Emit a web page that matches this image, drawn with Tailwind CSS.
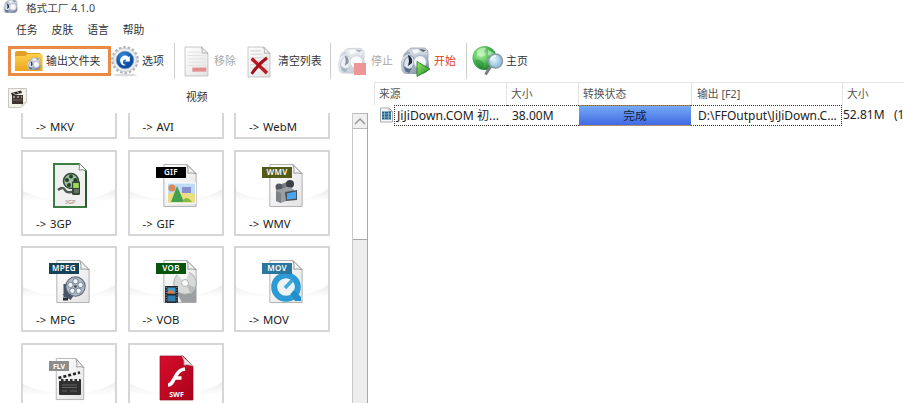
<!DOCTYPE html>
<html lang="zh-CN">
<head>
<meta charset="utf-8">
<title>格式工厂 4.1.0</title>
<script src="https://cdn.jsdelivr.net/npm/@tailwindcss/browser@4"></script>
</head>
<body class="w-[904px] h-[403px] overflow-hidden bg-white font-['Noto_Sans','Noto_Sans_CJK_SC',sans-serif] text-[11px] text-[#333]">
<svg class="absolute size-0">
  <defs>
    <linearGradient id="paper" x1="0" y1="0" x2="1" y2="1"><stop offset="0" stop-color="#fff"/><stop offset="1" stop-color="#e3e3e3"/></linearGradient>
    <linearGradient id="red" x1="0" y1="0" x2="1" y2="1"><stop offset="0" stop-color="#d80d2b"/><stop offset="1" stop-color="#a8021c"/></linearGradient>
    <radialGradient id="blue" cx=".4" cy=".3"><stop offset="0" stop-color="#3b93e0"/><stop offset="1" stop-color="#0a4ea0"/></radialGradient>
    <radialGradient id="green" cx=".35" cy=".35" r=".7"><stop offset="0" stop-color="#b5f2a8"/><stop offset=".55" stop-color="#4dbb55"/><stop offset="1" stop-color="#1a7a2d"/></radialGradient>
    <radialGradient id="lens" cx=".4" cy=".4"><stop offset="0" stop-color="#e3f6ff"/><stop offset="1" stop-color="#94c3dd"/></radialGradient>
    <linearGradient id="gold" x1="0" y1="0" x2="0" y2="1"><stop offset="0" stop-color="#ffd04c"/><stop offset="1" stop-color="#eda51b"/></linearGradient>
    <linearGradient id="metal" x1="0" y1="0" x2="1" y2="1"><stop offset="0" stop-color="#e3e8f0"/><stop offset=".5" stop-color="#b0bac9"/><stop offset="1" stop-color="#6b788c"/></linearGradient>
    <linearGradient id="play" x1="0" y1="0" x2="1" y2="1"><stop offset="0" stop-color="#9be86a"/><stop offset="1" stop-color="#158a1d"/></linearGradient>
    <linearGradient id="fade" x1="0" y1="0" x2="0" y2="1"><stop offset="0" stop-color="#e8e8e8"/><stop offset=".8" stop-color="#fff"/></linearGradient>
    <symbol id="swoosh" viewBox="2 2 92 62">
      <path d="M2 41C14 47 28 50 48 50S82 47 94 39V49C80 53 64 55 48 55S16 53 2 49Z" fill="url(#fade)" opacity=".8"/>
    </symbol>
    <symbol id="page" viewBox="0 0 36 46">
      <path d="M1.500 1.500H25L34.500 11V44.500H1.500Z" fill="url(#paper)" stroke="#b0b0b0"/>
      <path d="M25 1.500Q27 7 26 10.500Q30 9.500 34.500 11Z" fill="#f3f3f3" stroke="#999"/>
    </symbol>
    <symbol id="machine" viewBox="0 0 30 30">
      <path d="M7 5L11 2 25 2 28 5 28 12 22 13 8 11Z" fill="#cdd4de" stroke="#8d96a4" stroke-width=".7"/>
      <path d="M12 4L18 3 20 6 14 8Z" fill="#f4f7fa"/><path d="M19 3L26 4 23 6Z" fill="#5b626d"/>
      <path d="M3 10Q5 4 10 6L10 15 2 18Z" fill="#a3afc1"/>
      <path d="M1 15Q3 8 12 8L28 9 29 20Q29 28 20 28H5Q0 26 1 15Z" fill="url(#metal)"/>
      <ellipse cx="9" cy="17" rx="5" ry="7.500" transform="rotate(20 9 17)" fill="#dbe3ee" stroke="#7d8ba1" stroke-width=".8"/>
      <path d="M8 9Q13 11 12 17L8 20 9 15Z" fill="#222b3c"/><path d="M4 20Q8 24 12 22L9 27 5 25Z" fill="#5a7090"/>
      <circle cx="20" cy="16" r="6.500" fill="#f2f5f9" stroke="#a9b5c8"/><path d="M16 14Q19 10 24 14L20 17Z" fill="#fff"/>
    </symbol>
    <symbol id="reel" viewBox="0 0 20 20">
      <circle cx="10" cy="10" r="9.200" fill="#aeb9c8" stroke="#5b697b" stroke-width="1"/>
      <g fill="#f0f5fb" stroke="#4a5665" stroke-width=".6"><circle cx="10" cy="5" r="2.500"/><circle cx="14.800" cy="8.500" r="2.500"/><circle cx="13" cy="14.100" r="2.500"/><circle cx="7" cy="14.100" r="2.500"/><circle cx="5.200" cy="8.500" r="2.500"/></g>
      <circle cx="10" cy="10" r="1.200" fill="#34404d"/>
    </symbol>
  </defs>
</svg>

<div class="flex h-full flex-col">
  <header class="flex h-4 shrink-0 items-center pl-[3px] text-[#444]">
    <svg class="-mt-1 size-[15px]"><use href="#machine"/></svg>
    <span class="ml-2 -mt-px leading-4 text-[10.600px]">格式工厂 4.1.0</span>
  </header>
  <nav class="flex h-[27px] shrink-0 items-center gap-[14px] pl-4 pt-px text-[10.800px]">
    <span>任务</span><span>皮肤</span><span>语言</span><span>帮助</span>
  </nav>

  <div class="flex h-[39px] shrink-0 items-start text-[10.900px]">
    <div class="ml-2 mt-[3px] flex h-[30px] w-[103px] items-center border-[3px] border-[#e98b45]">
      <svg class="ml-[4px] h-[24px] w-[28px]" viewBox="0 0 28 24">
        <path d="M0 4Q0 2 2 2H10L13 4H24Q26 4 26 6V22H0Z" fill="#dea126"/>
        <path d="M1 7H10L13 5H26Q27.500 5 27.500 8V22H0V8Z" fill="url(#gold)"/>
        <use href="#machine" x="12" y="8" width="14" height="14"/>
      </svg>
      <span class="ml-[3px] whitespace-nowrap">输出文件夹</span>
    </div>
    <svg class="mt-[2px] h-[32px] w-[28px]" viewBox="0 0 28 32">
      <ellipse cx="14" cy="30" rx="12" ry="1.500" fill="#ddd"/>
      <circle cx="14" cy="15" r="12.600" fill="none" stroke="#b2b6bb" stroke-width="2.600" stroke-dasharray="2.600 1.800"/>
      <circle cx="14" cy="15" r="11.600" fill="#eceef0" stroke="#c5c9cd" stroke-width=".8"/>
      <circle cx="14" cy="15" r="8.800" fill="url(#blue)" stroke="#7a9cc4" stroke-width=".7"/>
      <path d="M9.500 17.500A5 5 0 0 1 17.500 12L18.800 11V16.500H14L15.500 14.800A2.600 2.600 0 0 0 11.800 17Q12 19.500 15.500 20Q10.800 21.500 9.500 17.500Z" fill="#fff"/>
    </svg>
    <span class="ml-[3px] w-[32px] pt-[10px] leading-4">选项</span>
    <span class="h-[36px] w-px bg-[#ccc]"></span>
    <svg class="ml-[9px] mt-[3px] h-[31px] w-[25px]" viewBox="0 0 36 46" preserveAspectRatio="none">
      <use href="#page"/>
      <path d="M5 9H22M5 14H31M5 19H31M5 24H31M5 29H31" stroke="#e3e3e3" stroke-width="1.500"/>
      <rect x="12" y="32" width="20" height="6" fill="#e58d8d"/>
    </svg>
    <span class="ml-[5px] w-[34px] pt-[10px] leading-4 text-[#a8a8a8]">移除</span>
    <svg class="-ml-px mt-[3px] h-[32px] w-[24px]" viewBox="0 0 36 46" preserveAspectRatio="none">
      <use href="#page"/>
      <path d="M5 7H20M5 12H24M5 17H31M5 22H31M5 27H31M5 32H31" stroke="#d6d6d6" stroke-width="1.500"/>
      <path d="M7 18L30 39" stroke="#c01822" stroke-width="5"/><path d="M30 17Q18 25 7 40" stroke="#a30f1a" stroke-width="4.500" fill="none"/>
    </svg>
    <span class="ml-[7px] w-[52px] whitespace-nowrap pt-[10px] leading-4">清空列表</span>
    <span class="h-[36px] w-px bg-[#ccc]"></span>
    <svg class="ml-[6px] mt-[3px] h-[31px] w-[31px]" viewBox="0 0 31 31">
      <use href="#machine" width="29" height="30" opacity=".5"/>
      <rect x="17" y="17" width="12" height="12" fill="#f09595"/>
    </svg>
    <span class="ml-[3px] w-[29px] pt-[10px] leading-4 text-[#a8a8a8]">停止</span>
    <svg class="mt-[3px] h-[31px] w-[31px]" viewBox="0 0 31 31">
      <use href="#machine" width="30" height="30"/>
      <path d="M17 15.500L30 23 17 30.500Z" fill="url(#play)" stroke="#197b1c" stroke-width=".8"/>
    </svg>
    <span class="ml-[3px] w-[32px] pt-[10px] leading-4 text-[#e03c22]">开始</span>
    <span class="h-[36px] w-px bg-[#ccc]"></span>
    <svg class="ml-[5px] mt-[2px] h-[32px] w-[32px]" viewBox="0 0 32 32">
      <circle cx="12.500" cy="13" r="12" fill="url(#green)"/>
      <path d="M5 6Q9 1 14 3L12 7 14 10 9 12 5 10ZM16 5L22 8 21 12 16 10Z" fill="#d4f8cf" opacity=".6"/>
      <path d="M3 15Q9 13 12 19L10 24Q4 21 3 15Z" fill="#17712a" opacity=".35"/>
      <path d="M19 21L13.500 29.500" stroke="#777e84" stroke-width="3"/>
      <circle cx="23.500" cy="16" r="7" fill="url(#lens)" stroke="#8d9aa3" stroke-width="1.500"/>
      <path d="M19 15Q20 11 24 11" stroke="#fff" stroke-width="1.500" fill="none"/>
    </svg>
    <span class="ml-[2px] pt-[10px] leading-4">主页</span>
  </div>

  <div class="flex min-h-0 flex-1">
    <section class="flex w-[368px] shrink-0 flex-col">
      <div class="flex h-[31px] shrink-0 items-center pl-2">
        <svg class="h-[20px] w-[19px]" viewBox="0 0 19 20">
          <path d="M.5.500H18.500V14L13 19.500H.5Z" fill="#f4f2ec" stroke="#c9c7c0"/><path d="M18.500 14H13V19.500Z" fill="#d8d5cc"/>
          <path d="M3 5L13 2.500 14 5 4 7.500Z" fill="#302a28"/><rect x="4" y="7" width="11" height="9" fill="#40342f"/>
          <path d="M5 4.500L7 6.500M9 3.500L11 5.500M5 9H7M9 9H11M13 9H14" stroke="#eee"/><path d="M5 12H14" stroke="#786a60"/>
        </svg>
        <span class="ml-[159px] text-[10.800px]">视频</span>
      </div>
      <div class="flex min-h-0 flex-1 overflow-hidden">
        <div class="h-full w-[352px] overflow-hidden pl-[21px]">
          <div class="-mt-[60px] grid w-[309px] grid-cols-[96px_96px_96px] gap-x-[10.500px] gap-y-[10.500px] text-[11.300px] text-[#222] [word-spacing:1px]">
            <article class="h-[86px] border-2 border-[#d6d6d6]"><div class="h-[62px]"></div><p class="pl-[13px] leading-[20px]">-&gt; MKV</p></article>
            <article class="h-[86px] border-2 border-[#d6d6d6]"><div class="h-[62px]"></div><p class="pl-[13px] leading-[20px]">-&gt; AVI</p></article>
            <article class="h-[86px] border-2 border-[#d6d6d6]"><div class="h-[62px]"></div><p class="pl-[13px] leading-[20px]">-&gt; WebM</p></article>

            <article class="h-[86px] border-2 border-[#d6d6d6]">
              <svg class="h-[62px] w-[92px]" viewBox="2 2 92 62">
                <use href="#swoosh" x="2" y="2" width="92" height="62"/>
                <path d="M33 14H58L65 21V57H33Z" fill="#f0f0f0" stroke="#3b7d42" stroke-width="2"/><path d="M65 21V57" stroke="#245a2c" stroke-width="2"/>
                <path d="M58 13Q59 17 58 20Q62 19 66 21Z" fill="#fff" stroke="#6d776d" stroke-width=".8"/>
                <path d="M37 40Q42 36 44 40T54 41" fill="none" stroke="#505b50" stroke-width="2.500"/>
                <circle cx="50" cy="31" r="7.500" fill="#9fbd9f" stroke="#334a35" stroke-width="1.500"/>
                <g fill="#1f4425"><circle cx="50" cy="26.500" r="2"/><circle cx="54.300" cy="30" r="2"/><circle cx="46" cy="30" r="2"/><circle cx="48" cy="35" r="2"/></g>
                <rect x="51" y="31" width="8" height="14" rx="1.500" fill="#3b453a"/><rect x="52.200" y="33" width="5.600" height="5" fill="#9bd95a"/><path d="M53 40H58M53 42H58" stroke="#a6b0a4" stroke-width=".8"/>
                <text x="49" y="53.500" text-anchor="middle" font-size="5.500" fill="#888">3GP</text>
              </svg>
              <p class="pl-[13px] leading-[20px]">-&gt; 3GP</p>
            </article>
            <article class="h-[86px] border-2 border-[#d6d6d6]">
              <svg class="h-[62px] w-[92px]" viewBox="2 2 92 62">
                <use href="#swoosh" x="2" y="2" width="92" height="62"/>
                <use href="#page" x="34" y="13" width="36" height="45"/>
                <rect x="39.500" y="33" width="28" height="20" fill="#bedcf6" stroke="#fff"/>
                <path d="M40 44Q48 40 67 44V52.500H40Z" fill="#ecdd83"/><circle cx="44" cy="38" r="3.600" fill="#d98a58"/>
                <rect x="54" y="37" width="9" height="6" fill="#888fd0"/><path d="M43 52L49 36 56 52Z" fill="#43a04e"/><path d="M54 52Q58 44 64 52Z" fill="#86bb3e"/>
                <rect x="28" y="17" width="30" height="11" fill="#000"/>
                <text x="43" y="25.400" text-anchor="middle" font-size="8" font-weight="600" letter-spacing=".3" fill="#fff">GIF</text>
              </svg>
              <p class="pl-[13px] leading-[20px]">-&gt; GIF</p>
            </article>
            <article class="h-[86px] border-2 border-[#d6d6d6]">
              <svg class="h-[62px] w-[92px]" viewBox="2 2 92 62">
                <use href="#swoosh" x="2" y="2" width="92" height="62"/>
                <use href="#page" x="34" y="13" width="36" height="45"/>
                <path d="M42 36L56 31 59 35 46 40Z" fill="#777d83"/><circle cx="56" cy="34" r="4" fill="#3c4046"/><circle cx="45" cy="37" r="3.500" fill="#555a62"/>
                <path d="M42 40L56 37 60 40V48L47 53 42 51Z" fill="#9b9ea2"/><path d="M42 41L47 43V53L42 51Z" fill="#7c8085"/>
                <path d="M51 42L63 40V50L52 51Z" fill="#4c5258"/><path d="M53 43.500L62 41.500V48.500L53 49.500Z" fill="#49a5ed"/>
                <rect x="28" y="17" width="30" height="11" fill="#535a16"/>
                <text x="43" y="25.400" text-anchor="middle" font-size="8" font-weight="600" letter-spacing=".3" fill="#fff">WMV</text>
              </svg>
              <p class="pl-[13px] leading-[20px]">-&gt; WMV</p>
            </article>

            <article class="h-[86px] border-2 border-[#d6d6d6]">
              <svg class="h-[62px] w-[92px]" viewBox="2 2 92 62">
                <use href="#swoosh" x="2" y="2" width="92" height="62"/>
                <use href="#page" x="34" y="13" width="36" height="45"/>
                <path d="M45 38V51M43 47L51 52" stroke="#46546a" stroke-width="5"/>
                <path d="M42 53H47" stroke="#222c38" stroke-width="3"/>
                <use href="#reel" x="44" y="30" width="21" height="21"/>
                <rect x="28" y="17" width="30" height="11" fill="#164259"/>
                <text x="43" y="25.400" text-anchor="middle" font-size="8" font-weight="600" letter-spacing=".3" fill="#fff">MPEG</text>
              </svg>
              <p class="pl-[13px] leading-[20px]">-&gt; MPG</p>
            </article>
            <article class="h-[86px] border-2 border-[#d6d6d6]">
              <svg class="h-[62px] w-[92px]" viewBox="2 2 92 62">
                <use href="#swoosh" x="2" y="2" width="92" height="62"/>
                <use href="#page" x="34" y="13" width="36" height="45"/>
                <path d="M48 46L68 38V56.500H54Z" fill="#9b9fa2"/>
                <circle cx="57" cy="37" r="11.300" fill="#d7dad9" stroke="#a0a5a5" stroke-width=".8"/><path d="M57 37L49 28Q57 23 61 26Z" fill="#f8f8f8"/><path d="M57 37L68 42 63 48Z" fill="#b8bebe"/>
                <circle cx="57" cy="37" r="3.500" fill="#f8f8f8" stroke="#b1b5b5"/>
                <rect x="37" y="40" width="13" height="17" fill="#222831"/><rect x="39.500" y="41.500" width="8" height="6" fill="#3e9bcf"/><path d="M39.500 46L43 43.500 47.500 47.500H39.500Z" fill="#dc7841"/><rect x="39.500" y="49.500" width="8" height="6" fill="#327eab"/>
                <path d="M38.200 41V57M48.900 41V57" stroke="#ccc" stroke-width=".7" stroke-dasharray="1 1.500"/>
                <rect x="28" y="17" width="30" height="11" fill="#07540b"/>
                <text x="43" y="25.400" text-anchor="middle" font-size="8" font-weight="600" letter-spacing=".3" fill="#fff">VOB</text>
              </svg>
              <p class="pl-[13px] leading-[20px]">-&gt; VOB</p>
            </article>
            <article class="h-[86px] border-2 border-[#d6d6d6]">
              <svg class="h-[62px] w-[92px]" viewBox="2 2 92 62">
                <use href="#swoosh" x="2" y="2" width="92" height="62"/>
                <use href="#page" x="34" y="13" width="36" height="45"/>
                <circle cx="52" cy="41" r="11.800" fill="#f1f7fa" stroke="#2b9ad5" stroke-width="6"/><path d="M56 47L60 44 67 51V55H61Z" fill="#238fca"/>
                <circle cx="52" cy="41" r="8" fill="#edf2f5"/><path d="M51 42L58 34.500" stroke="#42a9df" stroke-width="3.500"/>
                <rect x="28" y="17" width="30" height="11" fill="#2c779f"/>
                <text x="43" y="25.400" text-anchor="middle" font-size="8" font-weight="600" letter-spacing=".3" fill="#fff">MOV</text>
              </svg>
              <p class="pl-[13px] leading-[20px]">-&gt; MOV</p>
            </article>

            <article class="h-[86px] border-2 border-[#d6d6d6]">
              <svg class="h-[62px] w-[92px]" viewBox="2 2 92 62">
                <use href="#swoosh" x="2" y="2" width="92" height="62"/>
                <svg x="34" y="14" width="30" height="44" viewBox="0 0 36 46" preserveAspectRatio="none"><use href="#page"/></svg>
                <path d="M37 33.500L59 28V31L38 37Z" fill="#eee"/><path d="M37.500 35L59 29.500" stroke="#222" stroke-width="2.600" stroke-dasharray="3 2"/>
                <rect x="38" y="36" width="22" height="16" rx="1" fill="#303030"/><path d="M38 37H60" stroke="#e5e5e5" stroke-width="1.800" stroke-dasharray="2 2.500"/>
                <path d="M41 42H56M41 44.500H56M41 48H46M49 48H56" stroke="#707070" stroke-width=".8"/>
                <rect x="28" y="18" width="20" height="10" fill="#8d8d8d"/>
                <text x="38" y="25.500" text-anchor="middle" font-size="7" font-weight="700" fill="#fff">FLV</text>
              </svg>
            </article>
            <article class="h-[86px] border-2 border-[#d6d6d6]">
              <svg class="h-[62px] w-[92px]" viewBox="2 2 92 62">
                <use href="#swoosh" x="2" y="2" width="92" height="62"/>
                <path d="M32 13H55L65 23V57H32Z" fill="url(#red)" stroke="#9a1020" stroke-width=".7"/>
                <path d="M54 13Q57 18 56 22Q60 21 65 23Z" fill="#eee" stroke="#aaa" stroke-width=".7"/>
                <path d="M40 42C47 42 46 27 57 26M46 35H53.500" fill="none" stroke="#fff" stroke-width="3.600"/>
                <text x="48.500" y="54" text-anchor="middle" font-size="7" font-weight="700" fill="#fff">SWF</text>
              </svg>
            </article>
          </div>
        </div>
        <div class="flex w-4 shrink-0 flex-col border-x border-l-[#c8c8c8] border-r-[#a8a8a8]">
          <div class="flex h-4 shrink-0 items-center justify-center border-y border-[#bbb] bg-[#f0f0f0]">
            <svg class="h-[8px] w-[12px]" viewBox="0 0 12 8"><path d="M1 7L6 2 11 7" fill="none" stroke="#999" stroke-width="1.500"/></svg>
          </div>
          <div class="h-[110px] shrink-0 bg-white"></div>
          <div class="flex-1 border-t border-[#aaa] bg-[#eee]"></div>
        </div>
      </div>
    </section>

    <section class="ml-[6px] min-w-0 flex-1">
      <div class="grid h-[23px] grid-cols-[132px_72px_113px_151px_1fr] border-l border-t border-[#e4e4e4] text-[10.800px] leading-[22px] text-[#555]">
        <span class="border-r border-[#e4e4e4] pl-1">来源</span>
        <span class="border-r border-[#e4e4e4] pl-1">大小</span>
        <span class="border-r border-[#e4e4e4] pl-1">转换状态</span>
        <span class="border-r border-[#e4e4e4] pl-[5px]">输出 [F2]</span>
        <span class="pl-1">大小</span>
      </div>
      <div class="grid h-[21px] grid-cols-[20px_113px_72px_112px_151px_1fr] whitespace-nowrap text-[11.700px] leading-[20px] text-[#222]">
        <svg class="ml-[6px] mt-[2px] h-[16px] w-[13px]" viewBox="0 0 13 15">
          <path d="M.5.500H9L12.500 4V14.500H.5Z" fill="#f8f8f8" stroke="#a9adb0"/><path d="M9 .5V4H12.500" fill="none" stroke="#a9adb0"/>
          <rect x="2" y="4" width="9" height="8" fill="#24658e"/><path d="M2 6.500H11M2 9.500H11M4.500 4V12M8.500 4V12" stroke="#a2c6d8" stroke-width=".7"/>
        </svg>
        <span class="overflow-hidden border-y border-l border-dotted border-[#333] pl-[2px] text-[12.200px] leading-[19px]">JiJiDown.COM 初...</span>
        <span class="border-y border-dotted border-[#333] pl-[5px] text-[12px] leading-[19px]">38.00M</span>
        <span class="border-y border-dotted border-[#a88a60] bg-linear-to-b from-[#76a9f5] to-[#4169e2] text-center leading-[19px] text-[#111c3c]">完成</span>
        <span class="overflow-hidden border-y border-r border-dotted border-[#333] pl-[7px] text-[12px] leading-[19px]">D:\FFOutput\JiJiDown.C...</span>
        <span class="overflow-hidden pl-px text-[12px] leading-[20px]">52.81M&nbsp;&nbsp; (13</span>
      </div>
    </section>
  </div>
</div>
</body>
</html>
